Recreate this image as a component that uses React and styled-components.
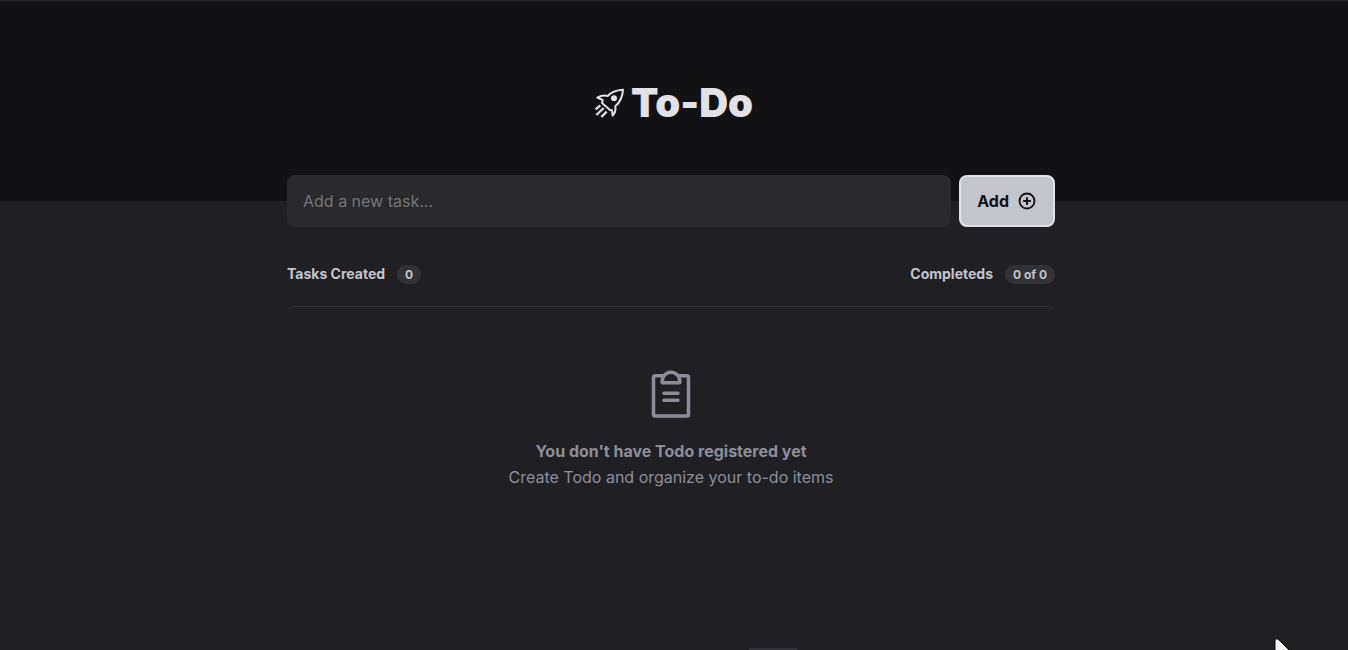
import React, { useState } from "react";
import styled, { createGlobalStyle } from "styled-components";
import { PiClipboardText, PiPlusCircleBold } from "react-icons/pi";

const GlobalStyle = createGlobalStyle`
  * { box-sizing: border-box; margin: 0; padding: 0; }
  body {
    min-height: 100vh;
    overflow: hidden;
    background: #202024;
    color: #8d8d99;
    font-family: Inter, "Liberation Sans", sans-serif;
    font-size: 16px;
    -webkit-font-smoothing: antialiased;
  }
`;

const Page = styled.div`
  position: relative;
  min-height: 100vh;
`;

const Header = styled.header`
  display: flex;
  justify-content: center;
  padding: 78px 0 74px;
  border-top: 1px solid #24262a;
  background: #121214;
`;

const Title = styled.h1`
  display: flex;
  align-items: center;
  gap: 6px;
  color: #e1e1e6;
  font-size: 40px;
  font-weight: 900;
  line-height: 48px;
`;

const Main = styled.main`
  padding-right: 6px;
`;

const Content = styled.div`
  width: 100%;
  max-width: 768px;
  margin: 0 auto;
`;

const TaskForm = styled.form`
  display: flex;
  gap: 8px;
  margin-top: -26px;
`;

const TaskInput = styled.input`
  flex: 1;
  min-width: 0;
  height: 52px;
  padding: 0 16px;
  border: 0;
  border-radius: 8px;
  outline: 0;
  background: #29292e;
  color: #e1e1e6;
  font: inherit;
  &::placeholder { color: #757575; }
`;

const AddButton = styled.button`
  display: flex;
  align-items: center;
  justify-content: center;
  gap: 8px;
  height: 52px;
  padding: 0 16px;
  border: 2px solid #e1e1e6;
  border-radius: 8px;
  background: #c4c4cc;
  color: #121214;
  font: inherit;
  font-weight: 700;
  cursor: pointer;
`;

const Summary = styled.div`
  display: flex;
  justify-content: space-between;
  margin: 36px 0 22px;
`;

const Counter = styled.p`
  display: flex;
  align-items: flex-end;
  gap: 12px;
  color: #c4c4cc;
  font-size: 14px;
  font-weight: 700;
  line-height: 21px;
`;

const Badge = styled.span`
  padding: 2px 8px;
  border-radius: 10px;
  background: #303236;
  font-size: 12px;
  line-height: 15px;
`;

const EmptyState = styled.section`
  display: flex;
  flex-direction: column;
  align-items: center;
  padding: 60px 16px;
  border-top: 1px solid #303236;
  border-radius: 8px;
  line-height: 26px;
  text-align: center;
`;

const EmptyIcon = styled(PiClipboardText)`
  margin-bottom: 15px;
`;

const Strong = styled.strong`
  font-weight: 700;
`;

const BottomEdge = styled.div`
  position: absolute;
  bottom: 0;
  left: 749px;
  width: 48px;
  height: 2px;
  background: #323238;
`;

const Pointer = styled.svg`
  position: absolute;
  right: 56px;
  bottom: 0;
`;

function Rocket() {
  return (
    <svg
      width="30"
      height="30"
      viewBox="15 16 90 90"
      fill="none"
      stroke="currentColor"
      strokeWidth="6"
      strokeLinejoin="round"
      aria-hidden="true"
    >
      <path d="M99 21C80 22 64 27 53 40C42 37 32 39 22 45L38 52L36 61L60 82L66 83L68 99C75 91 78 83 76 71C92 57 98 41 99 21Z" />
      <circle cx="72" cy="47" r="9" fill="currentColor" stroke="none" />
      <path d="M17 80L31 68M19 97L41 76M34 103L50 87" strokeWidth="7" />
    </svg>
  );
}

export default function App() {
  const [task, setTask] = useState("");
  return (
    <Page>
      <GlobalStyle />
      <Header>
        <Title><Rocket />To-Do</Title>
      </Header>
      <Main>
        <Content>
          <TaskForm onSubmit={(e) => e.preventDefault()}>
            <TaskInput
              aria-label="New task"
              placeholder="Add a new task..."
              value={task}
              onChange={(e) => setTask(e.target.value)}
            />
            <AddButton type="submit">Add <PiPlusCircleBold size={20} aria-hidden="true" /></AddButton>
          </TaskForm>
          <Summary>
            <Counter>Tasks Created <Badge>0</Badge></Counter>
            <Counter>Completeds <Badge>0 of 0</Badge></Counter>
          </Summary>
          <EmptyState>
            <EmptyIcon size={56} aria-hidden="true" />
            <Strong>You don't have Todo registered yet</Strong>
            <p>Create Todo and organize your to-do items</p>
          </EmptyState>
        </Content>
      </Main>
      <BottomEdge />
      <Pointer width="18" height="12" viewBox="0 0 18 12" aria-hidden="true">
        <path d="M1 13V1H4L16 13Z" fill="#f4f4f4" stroke="#0c0c0e" strokeWidth="1" />
      </Pointer>
    </Page>
  );
}
